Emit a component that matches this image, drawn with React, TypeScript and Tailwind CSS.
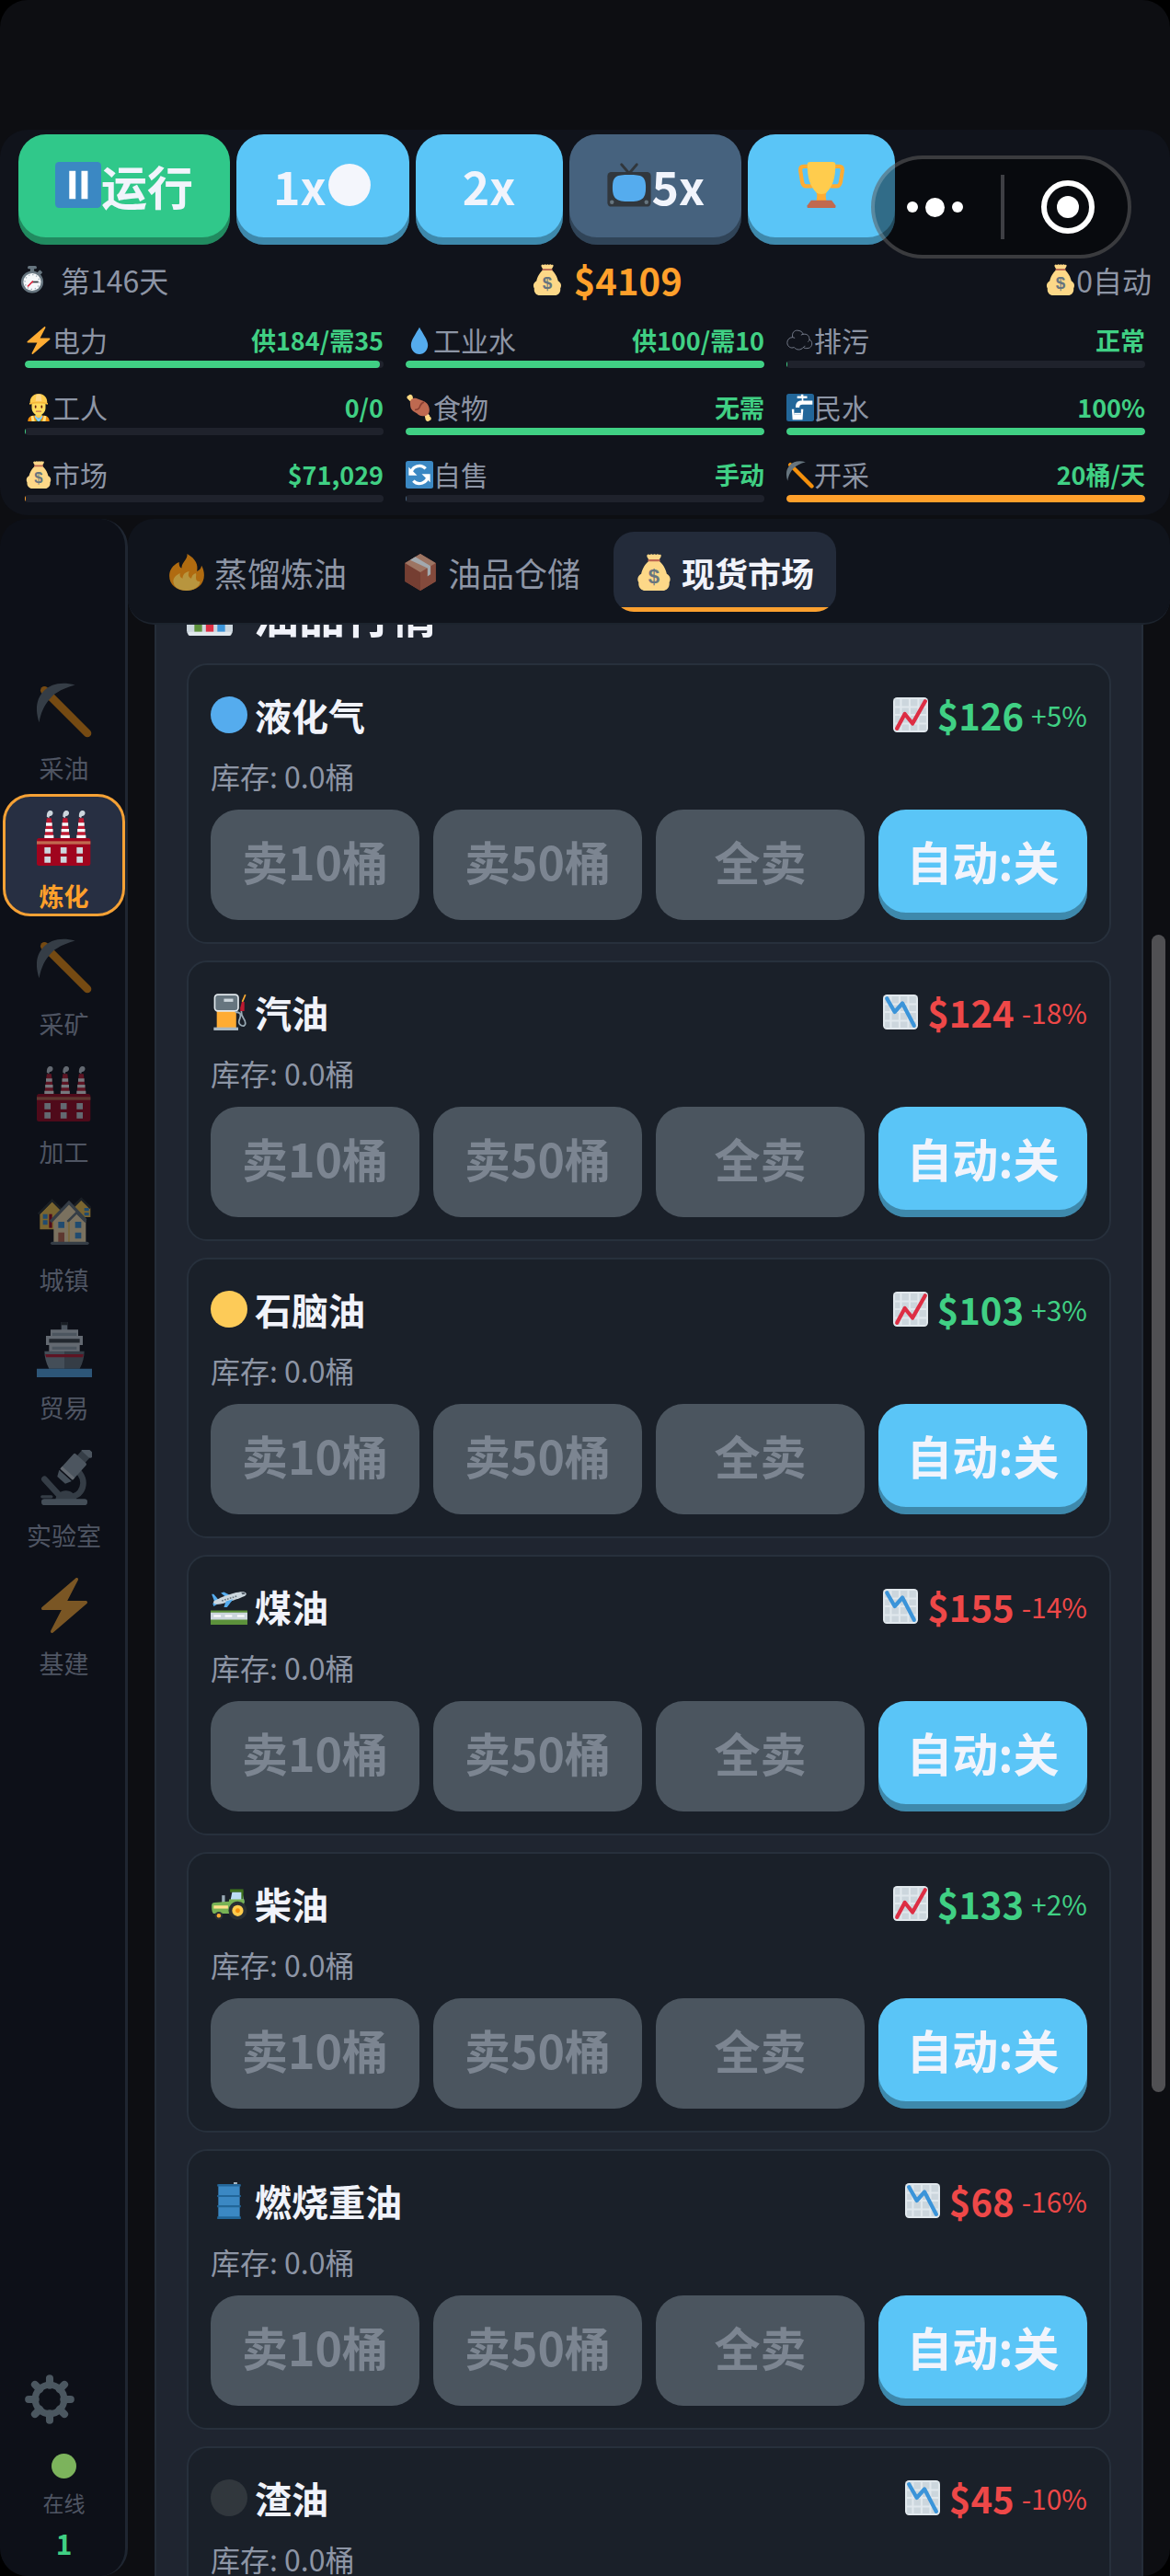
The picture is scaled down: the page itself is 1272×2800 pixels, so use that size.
import React from 'react';
import clsx from 'clsx';

const ICONS: Record<string, React.ReactNode> = {
  pause: (
    <>
      <rect width="36" height="36" rx="3" fill="#3b88c3" />
      <path d="M11 7h5v22h-5zM20.500 7h5v22h-5z" fill="#fff" />
    </>
  ),
  whiteDot: <circle cx="18" cy="18" r="16.500" fill="#f4f6fc" />,
  blueDot: <circle cx="18" cy="18" r="18" fill="#55acee" />,
  yellowDot: <circle cx="18" cy="18" r="18" fill="#fdcb58" />,
  blackDot: <circle cx="18" cy="18" r="18" fill="#31373d" />,
  greenDot: <circle cx="18" cy="18" r="18" fill="#7cb35c" />,
  tv: (
    <>
      <path d="M12 2l6 7 6-7" fill="none" stroke="#31373d" strokeWidth="2" strokeLinecap="round" />
      <rect x="1" y="8" width="34" height="27" rx="3" fill="#31373d" />
      <path d="M18 10c10 0 13 1 13 10s-3 11-13 11S5 29 5 20s3-10 13-10z" fill="#55acee" />
      <circle cx="4.500" cy="31.500" r="1.600" fill="#66757f" />
      <circle cx="31.500" cy="31.500" r="1.600" fill="#66757f" />
    </>
  ),
  trophy: (
    <>
      <path d="M9 3.500H4c-2 0-2.500 1.500-2.500 3L3 16c.5 2 1.500 3 3 3h5M27 3.500h5c2 0 2.500 1.500 2.500 3L33 16c-.5 2-1.500 3-3 3h-5" fill="none" stroke="#ffac33" strokeWidth="3" />
      <path d="M14 24h8c-1 2-.5 4 0 7h-8c.5-3 1-5 0-7z" fill="#ffac33" />
      <path d="M7 2c0-1.500 1-2 2.500-2h17C28 0 29 .5 29 2c0 10-2 17-7 22-1.500 1.500-6.500 1.500-8 0C9 19 7 12 7 2z" fill="#ffcc4d" />
      <path d="M10 30h16l3 4c.5 1.500 0 2-1 2H8c-1 0-1.500-.5-1-2z" fill="#c1694f" />
    </>
  ),
  stopwatch: (
    <>
      <rect x="15.500" y="3" width="5" height="5" fill="#66757f" />
      <rect x="12" y="0" width="12" height="4" rx="2" fill="#66757f" />
      <rect x="26" y="6" width="5" height="5" rx="1" fill="#66757f" transform="rotate(42 28 8)" />
      <circle cx="18" cy="21" r="14.500" fill="#66757f" />
      <circle cx="18" cy="21" r="11.500" fill="#f5f8fa" />
      <circle cx="18" cy="21" r="9.500" fill="none" stroke="#99aab5" strokeWidth="1.500" strokeDasharray="1.500 3.470" />
      <path d="M18 21h8" stroke="#31373d" strokeWidth="2" />
      <path d="M19 20l-7 7" stroke="#dd2e44" strokeWidth="2" />
    </>
  ),
  money: (
    <>
      <path d="M13 7h10c3.500 2.500 6.500 8 7.500 12.500 3 1.500 4.500 5 2.500 8.500.5 4-1.500 7-5 8H8c-3.500-1-5.500-4-5-8-2-3.500-.5-7 2.500-8.500C6.500 15 9.500 9.500 13 7z" fill="#fdd888" />
      <path d="M11 1.500C12 0 13 .5 14 1c1-1 2-1 3 0 1-1 2-1 3 0 1-1 2-1 3 0 1-.5 2-.5 2 .5 0 2-1.500 3-2 4.500H13c-.5-1.500-2-2.500-2-4.500z" fill="#fdd888" />
      <rect x="12" y="5.500" width="12" height="2" rx="1" fill="#bf6952" />
      <text x="18" y="29" textAnchor="middle" fontSize="20" fontWeight="700" fontFamily="Liberation Sans, sans-serif" fill="#67757f">$</text>
    </>
  ),
  zap: (
    <path
      d="M32.938 15.651C32.792 15.260 32.418 15 32 15H19.925L26.890 1.458c.219-.426.106-.947-.271-1.243C26.437.071 26.218 0 26 0c-.233 0-.466.082-.653.243L18 6.588 3.347 19.243c-.316.273-.43.714-.284 1.105S3.582 21 4 21h12.075L9.110 34.542c-.219.426-.106.947.271 1.243.182.144.401.215.619.215.233 0 .466-.082.653-.243L18 29.412l14.653-12.655c.317-.273.43-.714.285-1.106z"
      fill="#ffac33"
    />
  ),
  drop: <path d="M29 24c0 6.500-4.500 12-11 12S7 30.500 7 24C7 17.500 14 8.500 18 1c4 7.500 11 16.500 11 23z" fill="#55acee" />,
  cloud: (
    <path
      d="M8 14C7 8 10 5 14 5c4 0 7 2 8 5 5-1 8 2 8 7 5 2 4 10-1 11-4 1-6 0-7-1-3 4-9 4-12 0-4 2-9-1-9-6 0-4 3-7 7-7zM8 14c1 0 2 .5 3 1M22 10c-1 0-2 .5-3 1M30 17c0 1-1 2-2 3M22 27c1 0 2-1 2-2"
      fill="none"
      stroke="#858d9c"
      strokeWidth="1"
    />
  ),
  worker: (
    <>
      <path d="M4 36c0-5 3-7 7-7.500h14c4 .5 7 2.500 7 7.500z" fill="#f4900c" />
      <path d="M8 29l3-.5 2 7.500H9zM28 29l-3-.5-2 7.500h4z" fill="#ffe082" />
      <path d="M13 28h10l-2 8h-6z" fill="#5c913b" />
      <path d="M13 28l5 4 5-4v3l-4 5h-2l-4-5z" fill="#88c9f9" />
      <path d="M14 23h8v6c-2 3-6 3-8 0z" fill="#f9ca55" />
      <path d="M9 11h18v7c0 6-4 10-9 10S9 24 9 18z" fill="#ffdc5d" />
      <path d="M7 13C6 5 11 0 18 0s12 5 11 13c-6-2-16-2-22 0z" fill="#ffcc4d" />
      <path d="M15 1h6l1 9h-8z" fill="#fdd888" />
      <path d="M6 12c7-2 17-2 24 0v2c-7-2-17-2-24 0z" fill="#f4b83c" />
      <path d="M14 16v2M22 16v2" stroke="#662113" strokeWidth="2" strokeLinecap="round" />
      <path d="M15 23h6" stroke="#c1694f" strokeWidth="1.500" strokeLinecap="round" />
    </>
  ),
  meat: (
    <>
      <path d="M6 6l24 24" stroke="#ffe8b6" strokeWidth="4" />
      <path d="M2 6a3 3 0 0 1 2-4 3 3 0 0 1 5 1l1 5-4 2zM33 31a3 3 0 0 1-2 4 3 3 0 0 1-5-1l-1-5 4-2z" fill="#ffd983" />
      <path d="M6 13c-1-5 3-8 8-7l8 3c6 2 9 7 9 12 0 6-4 9-9 8-5 0-6-3-10-5-4-2-6-5-6-11z" fill="#be6950" />
      <path d="M24 11c-4 1-5 4-6 7-1 2-3 3-6 3" fill="none" stroke="#8a3f31" strokeWidth="2" />
    </>
  ),
  water: (
    <>
      <rect width="36" height="36" rx="3" fill="#226699" />
      <path d="M14 3h5V1h3v2h5v3h-5v3h12v5H21c-3 0-4 1-4 4h-5c0-6 2-9 8-9V6h-6z" fill="#fff" />
      <path d="M7 20h3v7h9v-7h3l-1 14H8z" fill="#fff" />
      <path d="M10 25h9v2h-9z" fill="#fff" />
    </>
  ),
  refresh: (
    <>
      <rect width="36" height="36" rx="3" fill="#3b88c3" />
      <path d="M7 17a11 11 0 0 1 19-7M29 19a11 11 0 0 1-19 7" fill="none" stroke="#fff" strokeWidth="4" />
      <path d="M4 8v11h11zM32 28V17H21z" fill="#fff" />
    </>
  ),
  pickaxe: (
    <>
      <path d="M5 5l28 28" stroke="#f4900c" strokeWidth="5.200" strokeLinecap="round" />
      <path d="M25 1.500C16-1 9 1 5 5S-2 15 1.500 26c1.500-8 4-12 7.500-16S18 3.500 25 1.500z" fill="#66757f" />
    </>
  ),
  fire: (
    <>
      <path d="M35 21c0-4-1-7-2.500-9.500C32 14 31 16 28 17c1.500-6-1-12-9.500-17 .5 6-5.500 8-5.500 14-2-1-2.500-3-2.500-6C4 11 1 16 1 21.500 1 30 8 36 18 36s17-6 17-15z" fill="#f4900c" />
      <path d="M31 27c-2.500.5-4-1-4-3.500 0-2 .5-3 0-4.500-3 1-4 3-4.500 5-3-1-3.500-4-2-7-5 1-6.500 4-6.500 7-2.500-.5-3-2.500-2.500-5C7 21 4.500 24 5 28c.5 5 6 8 13 8s13-4 13-9z" fill="#ffcc4d" />
    </>
  ),
  package: (
    <>
      <path d="M18 0l15 9v18l-15 9-15-9V9z" fill="#c1694f" />
      <path d="M3 9l15 9v18L3 27z" fill="#a0513c" />
      <path d="M33 9l-15 9v18l15-9z" fill="#b5624a" />
      <path d="M18 0L3 9l15 9 15-9z" fill="#d99e82" />
      <path d="M8 6l5-3 15 9v8l-3 2v-8z" fill="#e1e8ed" />
    </>
  ),
  bars: (
    <>
      <rect width="36" height="36" rx="4" fill="#ccd6dd" />
      <path d="M6 10h6v23H6z" fill="#5c913b" />
      <path d="M15 4h6v29h-6z" fill="#dd2e44" />
      <path d="M24 16h6v17h-6z" fill="#3b94d9" />
      <rect x="1" y="33" width="34" height="3" rx="1.500" fill="#e1e8ed" />
    </>
  ),
  factory: (
    <>
      <path d="M5 18L6.500 5h3L11 18zM15.500 18L17 5h3l1.500 13zM26 18l1.500-13h3L32 18z" fill="#be1931" />
      <path d="M6 8h4v2H6zM5.500 12h5v2h-5zM5 16h6v2H5zM16.500 8h4v2h-4zM16 12h5v2h-5zM15.500 16h6v2h-6zM27 8h4v2h-4zM26.500 12h5v2h-5zM26 16h6v2h-6z" fill="#f5f8fa" />
      <path d="M6.500 4c0-3 1-4 2.500-4s2 2 1 3-2 0-2 2zM17 4c0-3 1-4 2.500-4s2 2 1 3-2 0-2 2zM27.500 4c0-3 1-4 2.500-4s2 2 1 3-2 0-2 2z" fill="#ccd6dd" />
      <rect x="0" y="18" width="35" height="18" rx="1.500" fill="#a0041e" />
      <rect x="0" y="20" width="35" height="2" fill="#c1694f" />
      <path d="M5 24h4v4H5zM15.500 24h4v4h-4zM26 24h4v4h-4zM5 30h4v4H5zM15.500 30h4v4h-4zM26 30h4v4h-4z" fill="#ccd6dd" />
    </>
  ),
  houses: (
    <>
      <path d="M2 13l8-8 8 8v10H2zM23 9l6-6 6 6v6H23z" fill="#ffcc4d" />
      <path d="M1 13l9-9 9 9M23 9l6-6 6 6" fill="none" stroke="#292f33" strokeWidth="1.500" />
      <path d="M4 13h3v3H4zM4 17h3v3H4zM31 9h3v2h-3zM31 12h3v2h-3z" fill="#3b94d9" />
      <path d="M8 13h2v9H8z" fill="#a0041e" />
      <path d="M11 17L21 6l11 11v15H11z" fill="#ffe8b6" />
      <path d="M9 18L21 5.500 32 17" fill="none" stroke="#66757f" strokeWidth="2" />
      <path d="M21 17l5-5 5 5v15H21z" fill="#ffe8b6" />
      <path d="M20 18l6-6 6 6" fill="none" stroke="#66757f" strokeWidth="1.500" />
      <path d="M21 18v14" stroke="#ffcc4d" strokeWidth=".8" />
      <path d="M14 18h4v4h-4zM25 18h4v4h-4zM25 25h4v4h-4z" fill="#3b94d9" />
      <path d="M14 25h4v7h-4z" fill="#c1694f" />
      <rect x="9" y="31" width="25" height="2" rx="1" fill="#66757f" />
    </>
  ),
  ship: (
    <>
      <path d="M16 0h4v6h-4z" fill="#99aab5" />
      <path d="M16 0h4v2h-4z" fill="#292f33" />
      <path d="M9 5h18v4h3v6h-2v5H8v-5H6V9h3z" fill="#ccd6dd" />
      <path d="M10 7h16v2H10zM10 16h16v2H10z" fill="#99aab5" />
      <path d="M8 11h20v2.500H8z" fill="#3b4349" />
      <path d="M5 19h13v11.500H8c-2-4-3-8-3-11.500z" fill="#8899a6" />
      <path d="M31 19H18v11.500h10c2-4 3-8 3-11.500z" fill="#66757f" />
      <path d="M5.500 21h25l-.5 2H6z" fill="#be1931" />
      <path d="M0 30.500h36V36H0z" fill="#55acee" />
    </>
  ),
  microscope: (
    <>
      <path d="M5 19l11 12" stroke="#66757f" strokeWidth="4" strokeLinecap="round" />
      <path d="M26 13c8 7 4 18-6 18" fill="none" stroke="#66757f" strokeWidth="4" />
      <path d="M12 34c0-10 14-10 14 0z" fill="#66757f" />
      <rect x="3" y="32" width="30" height="4" rx="2" fill="#8899a6" />
      <rect x="2.500" y="29.500" width="8" height="2" rx="1" fill="#66757f" />
      <g transform="rotate(42 22 13)">
        <rect x="19" y="-4" width="7" height="9" fill="#66757f" />
        <rect x="18" y="-5" width="9" height="4" rx="2" fill="#99aab5" />
        <rect x="16.500" y="3" width="11" height="14" rx="1" fill="#99aab5" />
        <rect x="16.500" y="15" width="11" height="2" fill="#ccd6dd" />
        <path d="M16.500 18h11l-2 4h-7z" fill="#8899a6" />
      </g>
    </>
  ),
  gear: (
    <>
      <circle cx="18" cy="18" r="10.500" fill="none" stroke="#66757f" strokeWidth="4.800" />
      <path
        d="M18 2.800v5M18 28.200v5M2.800 18h5M28.200 18h5M7.300 7.300l3.500 3.500M25.200 25.200l3.500 3.500M7.300 28.700l3.500-3.500M25.200 10.800l3.500-3.500"
        stroke="#66757f"
        strokeWidth="5.400"
        strokeLinecap="round"
      />
    </>
  ),
  pump: (
    <>
      <path d="M6 17h19v17H6z" fill="#ffac33" />
      <rect x="4" y="1" width="23" height="16" rx="3" fill="#66757f" stroke="#e1e8ed" strokeWidth="1.500" />
      <rect x="13" y="5" width="9" height="3" fill="#ccd6dd" />
      <path d="M24 18c6 0 6 3 4 8s6 8 6 3-4-4-4-12" fill="none" stroke="#99aab5" strokeWidth="1.600" />
      <path d="M31 8l3-7" stroke="#ffac33" strokeWidth="1.500" />
      <path d="M29 14l1.500-6h2.500v9h-4z" fill="#be1931" />
      <rect x="3" y="33" width="24" height="3" fill="#aab8c2" />
    </>
  ),
  plane: (
    <>
      <path d="M0 22h36v14H0z" fill="#5c913b" />
      <path d="M0 24h36v7H0z" fill="#ccd6dd" />
      <path d="M3 27.500h7M14 27.500h7M26 27.500h7" stroke="#fff" strokeWidth="1.800" />
      <path d="M10 5l3-1 8 4-5 2zM1 6l2 0 5 6-4 2zM2 15l6-3 0 3-5 3z" fill="#55acee" />
      <path d="M3 13C12 8 26 3 33 4c3 1 2 3 0 4C26 11 12 16 6 16c-2 0-4-1-3-3z" fill="#ccd6dd" />
      <path d="M11 12.500l15-4.500" stroke="#66757f" strokeWidth="1.400" strokeDasharray="1.500 1.200" />
      <path d="M30 4.500l3 0 1 1.500-3 .5z" fill="#55606a" />
      <path d="M15 13l7-2-6 8-3 0z" fill="#55acee" />
    </>
  ),
  tractor: (
    <>
      <path d="M19 4h13v3H19z" fill="#3e721d" />
      <path d="M21 7h10l2 10H19z" fill="#bbddf5" />
      <path d="M30 6h2v8h-2z" fill="#3e721d" />
      <path d="M11 10h3v8h-3z" fill="#99aab5" />
      <path d="M1 20c0-2 1-3 3-3l14-1v-2h15l-1 14H3c-2-1-2-6-2-8z" fill="#77b255" />
      <path d="M3 20h14v3H3z" fill="#ffe08a" />
      <circle cx="26.500" cy="25" r="9" fill="#292f33" />
      <circle cx="26.500" cy="25" r="5.500" fill="#ffcc4d" />
      <circle cx="26.500" cy="25" r="2.200" fill="#f4900c" />
      <circle cx="8" cy="30" r="4" fill="#292f33" />
      <circle cx="8" cy="30" r="2" fill="#ffac33" />
    </>
  ),
  drum: (
    <>
      <path d="M22.500 0h3.500v2h-3.500z" fill="#aab8c2" />
      <path d="M7.500 2h21v33h-21z" fill="#3b88c3" />
      <path d="M6.500 2h23v2h-23zM6.500 12.500h23v2h-23zM6.500 22.500h23v2h-23zM6.500 33.500h23V36h-23z" fill="#226699" />
    </>
  ),
  chartUp: (
    <>
      <rect x="0" y="0" width="36" height="36" rx="4" fill="#e1e8ed" />
      <path d="M2 2h5v7H2zM9 2h7v7H9zM18 2h7v7h-7zM27 2h7v7h-7zM2 11h5v6H2zM9 11h7v6H9zM18 11h7v6h-7zM27 11h7v6h-7zM2 19h5v7H2zM9 19h7v7H9zM18 19h7v7h-7zM27 19h7v7h-7zM2 28h5v6H2zM9 28h7v6H9zM18 28h7v6h-7zM27 28h7v6h-7z" fill="#ccd6dd" />
      <path d="M4 32l8-15 8 10L33 4" fill="none" stroke="#dd2e44" strokeWidth="4" strokeLinecap="round" strokeLinejoin="round" />
    </>
  ),
  chartDown: (
    <>
      <rect x="0" y="0" width="36" height="36" rx="4" fill="#e1e8ed" />
      <path d="M2 2h5v7H2zM9 2h7v7H9zM18 2h7v7h-7zM27 2h7v7h-7zM2 11h5v6H2zM9 11h7v6H9zM18 11h7v6h-7zM27 11h7v6h-7zM2 19h5v7H2zM9 19h7v7H9zM18 19h7v7h-7zM27 19h7v7h-7zM2 28h5v6H2zM9 28h7v6H9zM18 28h7v6h-7zM27 28h7v6h-7z" fill="#ccd6dd" />
      <path d="M4 4l8 14 8-9 12 23" fill="none" stroke="#3b94d9" strokeWidth="4" strokeLinecap="round" strokeLinejoin="round" />
    </>
  ),
};

function Icon({ name, className }: { name: string; className?: string }) {
  return (
    <svg viewBox="0 0 36 36" aria-hidden="true" className={clsx('shrink-0', className)}>
      {ICONS[name]}
    </svg>
  );
}

const stats = [
  { icon: 'zap', label: '电力', value: '供184/需35', percent: 99, bar: 'bg-[#40d084]' },
  { icon: 'drop', label: '工业水', value: '供100/需10', percent: 100, bar: 'bg-[#40d084]' },
  { icon: 'cloud', label: '排污', value: '正常', percent: 0, bar: 'bg-[#40d084]' },
  { icon: 'worker', label: '工人', value: '0/0', percent: 0, bar: 'bg-[#40d084]' },
  { icon: 'meat', label: '食物', value: '无需', percent: 100, bar: 'bg-[#40d084]' },
  { icon: 'water', label: '民水', value: '100%', percent: 100, bar: 'bg-[#40d084]' },
  { icon: 'money', label: '市场', value: '$71,029', percent: 0, bar: 'bg-[#ffa02b]' },
  { icon: 'refresh', label: '自售', value: '手动', percent: 0, bar: 'bg-[#46627e]' },
  { icon: 'pickaxe', label: '开采', value: '20桶/天', percent: 100, bar: 'bg-[#ffa02b]' },
];

const navItems = [
  { icon: 'pickaxe', label: '采油' },
  { icon: 'factory', label: '炼化', active: true },
  { icon: 'pickaxe', label: '采矿' },
  { icon: 'factory', label: '加工' },
  { icon: 'houses', label: '城镇' },
  { icon: 'ship', label: '贸易' },
  { icon: 'microscope', label: '实验室' },
  { icon: 'zap', label: '基建' },
];

const tabs = [
  { icon: 'fire', label: '蒸馏炼油' },
  { icon: 'package', label: '油品仓储' },
  { icon: 'money', label: '现货市场', active: true },
];

const products = [
  { icon: 'blueDot', name: '液化气', price: 126, change: 5 },
  { icon: 'pump', name: '汽油', price: 124, change: -18 },
  { icon: 'yellowDot', name: '石脑油', price: 103, change: 3 },
  { icon: 'plane', name: '煤油', price: 155, change: -14 },
  { icon: 'tractor', name: '柴油', price: 133, change: 2 },
  { icon: 'drum', name: '燃烧重油', price: 68, change: -16 },
  { icon: 'blackDot', name: '渣油', price: 45, change: -10 },
];

const baseButton =
  'flex h-[120px] items-center justify-center rounded-[30px] pb-[10px] text-[50px] font-bold';
const keyButton = 'text-[#f1f4fc] shadow-[inset_0_-8px_0_rgba(0,0,0,0.3)]';

function ProductCard({ icon, name, price, change }: (typeof products)[number]) {
  const up = change > 0;
  return (
    <article className="rounded-[22px] border-2 border-[#27303c] bg-[#1a2029] p-6">
      <div className="flex h-[60px] items-center justify-between">
        <h3 className="flex items-center gap-2 text-[40px] leading-[60px] font-bold text-[#f1f3fa]">
          <Icon name={icon} className="size-10" />
          {name}
        </h3>
        <p className={clsx('flex items-center', up ? 'text-[#40d084]' : 'text-[#ee4848]')}>
          <Icon name={up ? 'chartUp' : 'chartDown'} className="mr-[10px] size-[38px]" />
          <span className="mr-2 text-[40px] leading-[60px] font-bold">${price}</span>
          <span className="text-3xl leading-[60px]">
            {up ? '+' : ''}
            {change}%
          </span>
        </p>
      </div>
      <p className="mt-3 text-[32px] leading-[48px] text-[#8d95a5]">库存: 0.0桶</p>
      <div className="mt-[13px] grid grid-cols-4 gap-[15px]">
        {['卖10桶', '卖50桶', '全卖'].map((label) => (
          <button key={label} disabled className={clsx(baseButton, 'bg-[#4b555f] text-[#7c8591]')}>
            {label}
          </button>
        ))}
        <button className={clsx(baseButton, keyButton, 'bg-[#5ac5f7]')}>自动:关</button>
      </div>
    </article>
  );
}

export default function App() {
  return (
    <div className="h-screen bg-black font-['Noto_Sans_CJK_SC','Noto_Sans',sans-serif]">
      <div className="relative flex h-full flex-col overflow-hidden rounded-[30px] bg-[#0d0e12] pt-[141px]">
        {/* Header */}
        <header className="rounded-[30px] bg-[#10131b] px-5 pt-[5px] pb-[14px]">
          <div className="flex gap-[7px]">
            <button className={clsx(baseButton, keyButton, 'bg-[#30c88a] px-10')}>
              <Icon name="pause" className="size-[50px]" />
              运行
            </button>
            <button className={clsx(baseButton, keyButton, 'bg-[#5ac5f7] px-10')}>
              1x
              <Icon name="whiteDot" className="size-[50px]" />
            </button>
            <button className={clsx(baseButton, keyButton, 'min-w-[160px] bg-[#5ac5f7] px-10')}>2x</button>
            <button className={clsx(baseButton, keyButton, 'bg-[#46627e] px-10')}>
              <Icon name="tv" className="size-[50px]" />
              5x
            </button>
            <button
              aria-label="成就"
              className={clsx(baseButton, keyButton, 'min-w-[160px] bg-[#5ac5f7] px-10')}
            >
              <Icon name="trophy" className="size-[50px]" />
            </button>
          </div>

          <div className="mt-2 flex h-[60px] items-center justify-between text-[32px] text-[#8d95a5]">
            <span className="flex items-center gap-4">
              <Icon name="stopwatch" className="size-[30px]" />
              第146天
            </span>
            <span className="flex items-center gap-3 text-[40px] font-bold text-[#ffa02b]">
              <Icon name="money" className="size-[34px]" />
              $4109
            </span>
            <span className="flex items-center">
              <Icon name="money" className="size-[34px]" />
              0自动
            </span>
          </div>

          <div className="mt-[13px] grid grid-cols-3 gap-x-6 gap-y-5 px-[7px]">
            {stats.map(({ icon, label, value, percent, bar }) => (
              <div key={label}>
                <div className="flex h-[45px] items-center justify-between">
                  <span className="flex items-center text-3xl leading-[45px] text-[#8d95a5]">
                    <Icon name={icon} className="size-[30px]" />
                    {label}
                  </span>
                  <span className="text-[27px] leading-[45px] font-bold text-[#40d084]">{value}</span>
                </div>
                <div className="h-2 overflow-hidden rounded-full bg-[#1f222c]">
                  <div className={clsx('h-full min-w-px rounded-full', bar)} style={{ width: `${percent}%` }} />
                </div>
              </div>
            ))}
          </div>
        </header>

        {/* Mini program capsule */}
        <div className="absolute top-[169px] right-[42px] flex h-[112px] w-[283px] items-center rounded-full border-4 border-white/20 bg-black/45">
          <button aria-label="更多" className="flex flex-1 items-center justify-center gap-2 pr-[6px]">
            <span className="size-3 rounded-full bg-white" />
            <span className="size-[21px] rounded-full bg-white" />
            <span className="size-3 rounded-full bg-white" />
          </button>
          <div className="h-[70px] w-1 bg-[#3e3f44]" />
          <button aria-label="关闭" className="flex flex-1 items-center justify-center pl-1">
            <span className="flex size-[58px] items-center justify-center rounded-full border-6 border-white">
              <span className="size-6 rounded-full bg-white" />
            </span>
          </button>
        </div>

        <div className="mt-1 flex min-h-0 flex-1">
          {/* Sidebar */}
          <nav className="flex w-[139px] shrink-0 flex-col items-center rounded-[30px] border-r-3 border-[#1f2631] bg-[#0d1018] pt-[160px] pb-3 pl-[3px]">
            <div className="flex w-full flex-col gap-[6px]">
              {navItems.map(({ icon, label, active }, i) => (
                <button
                  key={i}
                  className={clsx(
                    'flex h-[133px] w-full flex-col items-center rounded-[30px] border-3 pt-[15px] text-[27px] leading-[34px]',
                    active
                      ? 'border-[#f5a135] bg-[#272f42] font-bold text-[#ffa02b]'
                      : 'border-transparent text-[#4f5563]',
                  )}
                >
                  <Icon name={icon} className={clsx('mb-4 size-[60px]', !active && 'opacity-45')} />
                  {label}
                </button>
              ))}
            </div>
            <button aria-label="设置" className="mt-auto mr-8 opacity-70">
              <Icon name="gear" className="size-[54px]" />
            </button>
            <div className="mt-8 flex flex-col items-center">
              <Icon name="greenDot" className="size-[27px]" />
              <span className="mt-2 text-[23px] leading-[36px] text-[#4f5563]">在线</span>
              <span className="mt-[2px] text-3xl leading-[48px] font-bold text-[#40d084]">1</span>
            </div>
          </nav>

          <div className="flex min-w-0 flex-1 flex-col">
            {/* Tabs */}
            <div className="relative z-10 flex gap-3 rounded-[28px] border-b-2 border-[#1c232d] bg-[#10141c] px-5 pt-[14px] pb-3">
              {tabs.map(({ icon, label, active }) => (
                <button
                  key={label}
                  className={clsx(
                    'relative flex h-[87px] items-center gap-[10px] overflow-hidden rounded-[22px] px-6 text-4xl',
                    active
                      ? 'bg-[#232b3a] font-bold text-[#f1f3fa] after:absolute after:inset-x-0 after:bottom-0 after:h-[5px] after:bg-[#fba02f]'
                      : 'text-[#8d95a5]',
                  )}
                >
                  <Icon name={icon} className={clsx('size-10', !active && 'opacity-70')} />
                  {label}
                </button>
              ))}
            </div>

            {/* Market list */}
            <div className="relative -mt-[3px] min-h-0 flex-1 overflow-hidden">
              <section className="mx-[29px] border-x-2 border-[#252d39] bg-[#1f2530] px-[33px] pb-8">
                <h2 className="-mt-[50px] flex h-20 items-center gap-[22px] text-[50px] font-bold text-[#f1f3fa]">
                  <Icon name="bars" className="size-[50px]" />
                  油品行情
                </h2>
                <div className="mt-[15px] flex flex-col gap-[18px]">
                  {products.map((product) => (
                    <ProductCard key={product.name} {...product} />
                  ))}
                </div>
              </section>
              <div className="absolute top-[340px] right-[5px] h-[1258px] w-[15px] rounded-full bg-[#505053]" />
            </div>
          </div>
        </div>
      </div>
    </div>
  );
}
